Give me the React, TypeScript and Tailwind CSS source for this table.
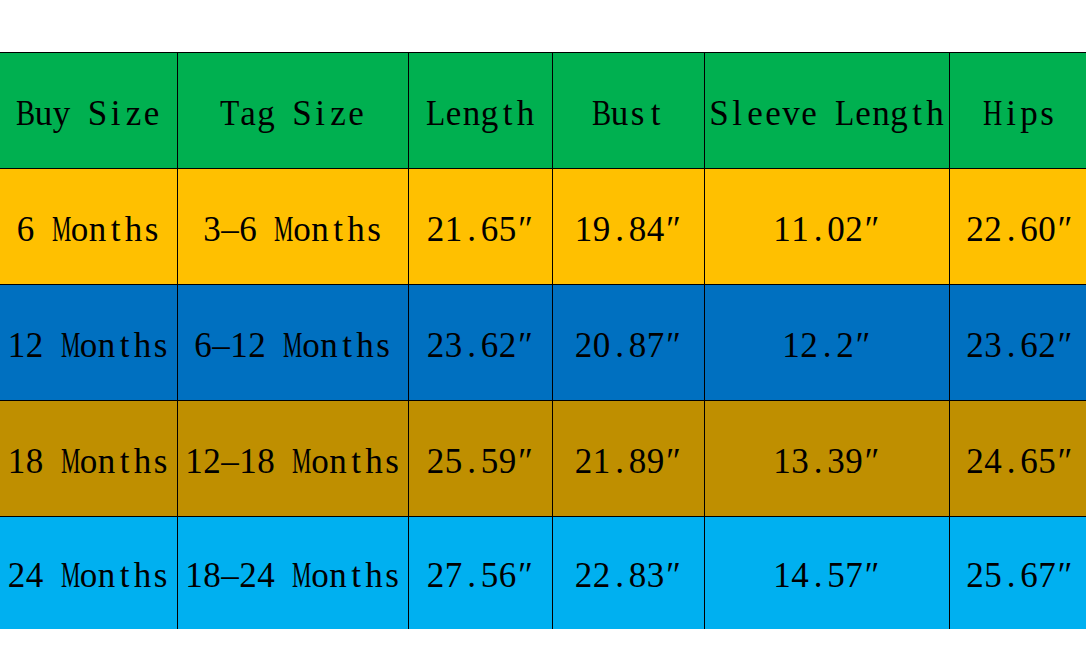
import React from "react";

const widths = ["w-[178px]", "w-[231px]", "w-[144px]", "w-[152px]", "w-[245px]", "w-[140px]"];

const rows: { bg: string; h: string; cells: string[] }[] = [
  { bg: "bg-[#00B050]", h: "h-[116px]", cells: ["Buy Size", "Tag Size", "Length", "Bust", "Sleeve Length", "Hips"] },
  { bg: "bg-[#FFC000]", h: "h-[116px]", cells: ["6 Months", "3-6 Months", "21.65″", "19.84″", "11.02″", "22.60″"] },
  { bg: "bg-[#0070C0]", h: "h-[116px]", cells: ["12 Months", "6-12 Months", "23.62″", "20.87″", "12.2″", "23.62″"] },
  { bg: "bg-[#BF8F00]", h: "h-[116px]", cells: ["18 Months", "12-18 Months", "25.59″", "21.89″", "13.39″", "24.65″"] },
  { bg: "bg-[#00B0F0]", h: "h-[113px]", cells: ["24 Months", "18-24 Months", "27.56″", "22.83″", "14.57″", "25.67″"] },
];

const squeeze: Record<string, string> = {
  M: "scale-x-[0.62]",
  B: "scale-x-[0.82]",
  H: "scale-x-[0.76]",
  L: "scale-x-[0.9]",
  T: "scale-x-[0.9]",
  m: "scale-x-[0.7]",
};

function MonoText({ text }: { text: string }) {
  return (
    <span
      className="flex text-black text-[35px] leading-none whitespace-pre pt-[5px]"
      style={{ fontFamily: '"Liberation Serif", "DejaVu Serif", serif' }}
    >
      {Array.from(text).map((ch, k) => (
        <span key={k} className="inline-flex w-[18px] justify-center">
          <span className={`inline-block ${squeeze[ch] ?? ""}`}>{ch === "-" ? "\u2013" : ch}</span>
        </span>
      ))}
    </span>
  );
}

export default function App() {
  return (
    <div className="w-[1086px] h-[672px] bg-white overflow-hidden pt-[52px]">
      <div className="w-[1090px]">
        {rows.map((r, i) => (
          <div key={i} className={`flex border-t border-black ${r.bg} ${r.h}`}>
            {r.cells.map((c, j) => (
              <div
                key={j}
                className={`${widths[j]} shrink-0 flex items-center justify-center ${j < 5 ? "border-r border-black" : ""}`}
              >
                <MonoText text={c} />
              </div>
            ))}
          </div>
        ))}
      </div>
    </div>
  );
}
